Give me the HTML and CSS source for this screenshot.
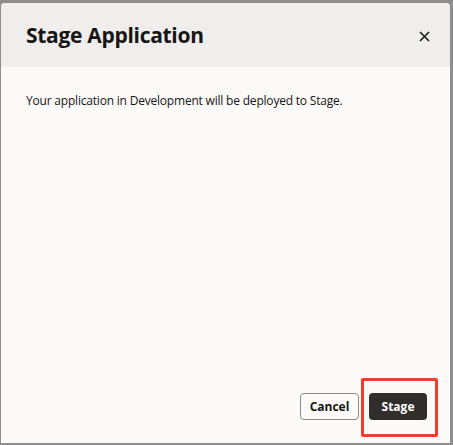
FILE: index.html
```html
<!DOCTYPE html>
<html>
<head>
<meta charset="utf-8">
<link rel="stylesheet" href="styles.css">
</head>
<body>
<div class="backdrop">
  <div class="dialog">
    <div class="dialog-header">
      <h1 class="dialog-title">Stage Application</h1>
      <button class="close-btn" aria-label="Close">
        <svg width="11" height="11" viewBox="0 0 11 11"><path d="M1 1L10 10M10 1L1 10" stroke="#1a1816" stroke-width="1.6" fill="none"/></svg>
      </button>
    </div>
    <div class="dialog-body">
      <p class="message">Your application in Development will be deployed to Stage.</p>
    </div>
    <div class="dialog-footer">
      <button class="btn btn-outline">Cancel</button>
      <button class="btn btn-primary">Stage</button>
      <div class="highlight"></div>
    </div>
  </div>
</div>
</body>
</html>
```
FILE: styles.css
```css
html, body {
  margin: 0;
  padding: 0;
  width: 453px;
  height: 445px;
  overflow: hidden;
}
body {
  background: #8e8e8e;
  font-family: "Open Sans", "Noto Sans", sans-serif;
}
.backdrop {
  padding: 3px 3px 0 1px;
  height: 445px;
  box-sizing: border-box;
}
.dialog {
  width: 449px;
  height: 440px;
  background: #fbfaf8;
  border-radius: 4px 4px 0 0;
  display: flex;
  flex-direction: column;
  position: relative;
}
.dialog-header {
  height: 64px;
  background: #efeeec;
  border-radius: 4px 4px 0 0;
  display: flex;
  align-items: center;
  justify-content: space-between;
  padding: 0 20px 0 25px;
  box-sizing: border-box;
}
.dialog-title {
  margin: 0;
  font-size: 21px;
  font-weight: 700;
  color: #161513;
  letter-spacing: -0.3px;
}
.close-btn {
  border: none;
  background: transparent;
  padding: 0;
  width: 11px;
  height: 11px;
  display: flex;
  margin-top: 2px;
}
.dialog-body {
  flex: 1;
  padding: 25px 25px 0 25px;
}
.message {
  margin: 0;
  font-size: 12px;
  color: #161513;
  letter-spacing: -0.2px;
}
.dialog-footer {
  display: flex;
  justify-content: flex-end;
  gap: 10px;
  padding: 0 23px 23px 0;
  position: relative;
}
.btn {
  height: 27px;
  border-radius: 4px;
  font-family: inherit;
  font-size: 12px;
  font-weight: 700;
  padding: 0;
  box-sizing: border-box;
}
.btn-outline {
  width: 59px;
  background: #fbfaf8;
  border: 1px solid #8e8b87;
  color: #161513;
}
.btn-primary {
  width: 58px;
  background: #312d2a;
  border: none;
  color: #ffffff;
}
.highlight {
  position: absolute;
  left: 360px;
  top: -15px;
  width: 77px;
  height: 59px;
  border: 3px solid #e8412c;
  border-radius: 2px;
  box-sizing: border-box;
}
```
